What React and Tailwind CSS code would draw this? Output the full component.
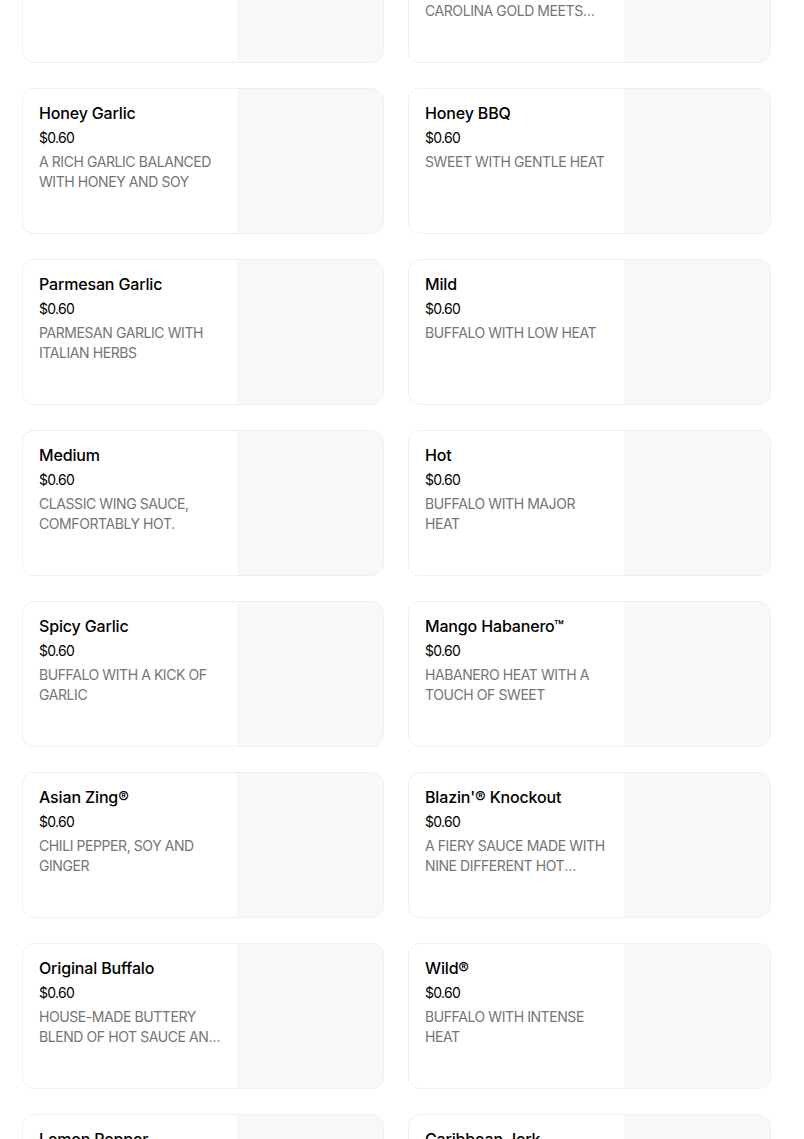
import React from 'react';

const sauces = [
    { name: 'Garlic Butter', price: '$0.60', desc: 'Rich and savory' },
    { name: 'Carolina Gold BBQ', price: '$0.60', desc: 'A tangy mustard sauce. Carolina gold meets…' },
    { name: 'Honey Garlic', price: '$0.60', desc: 'A rich garlic balanced with honey and soy' },
    { name: 'Honey BBQ', price: '$0.60', desc: 'Sweet with gentle heat' },
    { name: 'Parmesan Garlic', price: '$0.60', desc: 'Parmesan garlic with Italian herbs' },
    { name: 'Mild', price: '$0.60', desc: 'Buffalo with low heat' },
    { name: 'Medium', price: '$0.60', desc: 'Classic wing sauce, comfortably hot.' },
    { name: 'Hot', price: '$0.60', desc: 'Buffalo with major heat' },
    { name: 'Spicy Garlic', price: '$0.60', desc: 'Buffalo with a kick of garlic' },
    { name: 'Mango Habanero™', price: '$0.60', desc: 'Habanero heat with a touch of sweet' },
    { name: 'Asian Zing®', price: '$0.60', desc: 'Chili pepper, soy and ginger' },
    { name: "Blazin'® Knockout", price: '$0.60', desc: 'A fiery sauce made with nine different hot peppers' },
    { name: 'Original Buffalo', price: '$0.60', desc: 'House-made buttery blend of hot sauce and spices' },
    { name: 'Wild®', price: '$0.60', desc: 'Buffalo with intense heat' },
    { name: 'Lemon Pepper', price: '$0.60', desc: 'Zesty lemon with cracked pepper' },
    { name: 'Caribbean Jerk', price: '$0.60', desc: 'Sweet and spicy island flavors' },
];

const SauceCard = ({ sauce }) => (
    <div className="flex h-[146px] rounded-xl border border-[#f0f0f0] bg-white overflow-hidden">
        <div className="flex-1 min-w-0 pl-4 pr-3 pt-3">
            <h3 className="text-base leading-6 font-medium tracking-[-0.01em] text-black">{sauce.name}</h3>
            <p className="mt-[3px] text-sm leading-5 tracking-[-0.05em] text-black">{sauce.price}</p>
            <p className="mt-1 text-sm leading-5 uppercase tracking-[-0.03em] text-[#757575] line-clamp-2">{sauce.desc}</p>
        </div>
        <div className="w-[146px] shrink-0 bg-[#f8f8f8]" />
    </div>
);

export default function App() {
    return (
        <div className="h-[1139px] overflow-hidden bg-white font-['Inter',sans-serif]">
            <div className="-mt-[83px] ml-[22px] grid grid-cols-[362px_363px] gap-x-6 gap-y-[25px]">
                {sauces.map((s) => (
                    <SauceCard key={s.name} sauce={s} />
                ))}
            </div>
        </div>
    );
}
